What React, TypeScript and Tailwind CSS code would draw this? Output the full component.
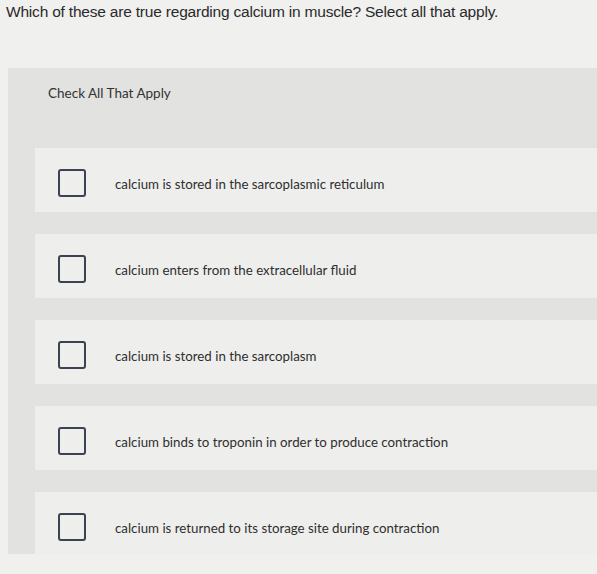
import React from "react";

const options = [
  "calcium is stored in the sarcoplasmic reticulum",
  "calcium enters from the extracellular fluid",
  "calcium is stored in the sarcoplasm",
  "calcium binds to troponin in order to produce contraction",
  "calcium is returned to its storage site during contraction",
];

export default function App() {
  return (
    <div className="w-[597px] h-[574px] bg-[#f0f0ef] overflow-hidden flex flex-col">
      <p
        className="pl-[6px] pt-[3px] text-[15.5px] leading-[18px] text-[#2a2a2a] tracking-[-0.2px] shrink-0"
        style={{ fontFamily: '"Liberation Sans", Arial, sans-serif' }}
      >
        Which of these are true regarding calcium in muscle? Select all that apply.
      </p>
      <div
        className="mt-[47px] ml-[8px] bg-[#e2e2e1] h-[486px] flex flex-col overflow-hidden shrink-0"
        style={{ fontFamily: 'Lato, "Open Sans", sans-serif' }}
      >
        <div className="h-[50px] pl-[40px] flex items-center text-[13.5px] text-[#333] shrink-0">
          Check All That Apply
        </div>
        <div className="pl-[27px] pt-[30px] flex flex-col gap-[22px]">
          {options.map((o) => (
            <div key={o} className="h-[64px] bg-[#eeeeed] flex items-center pl-[23px] shrink-0">
              <div className="w-[28px] h-[28px] mt-[5px] border-2 border-[#3b4252] rounded-[3px] shrink-0" />
              <span className="ml-[29px] mt-[8px] text-[13.3px] leading-[16px] text-[#2e2e2e]">{o}</span>
            </div>
          ))}
        </div>
      </div>
    </div>
  );
}
